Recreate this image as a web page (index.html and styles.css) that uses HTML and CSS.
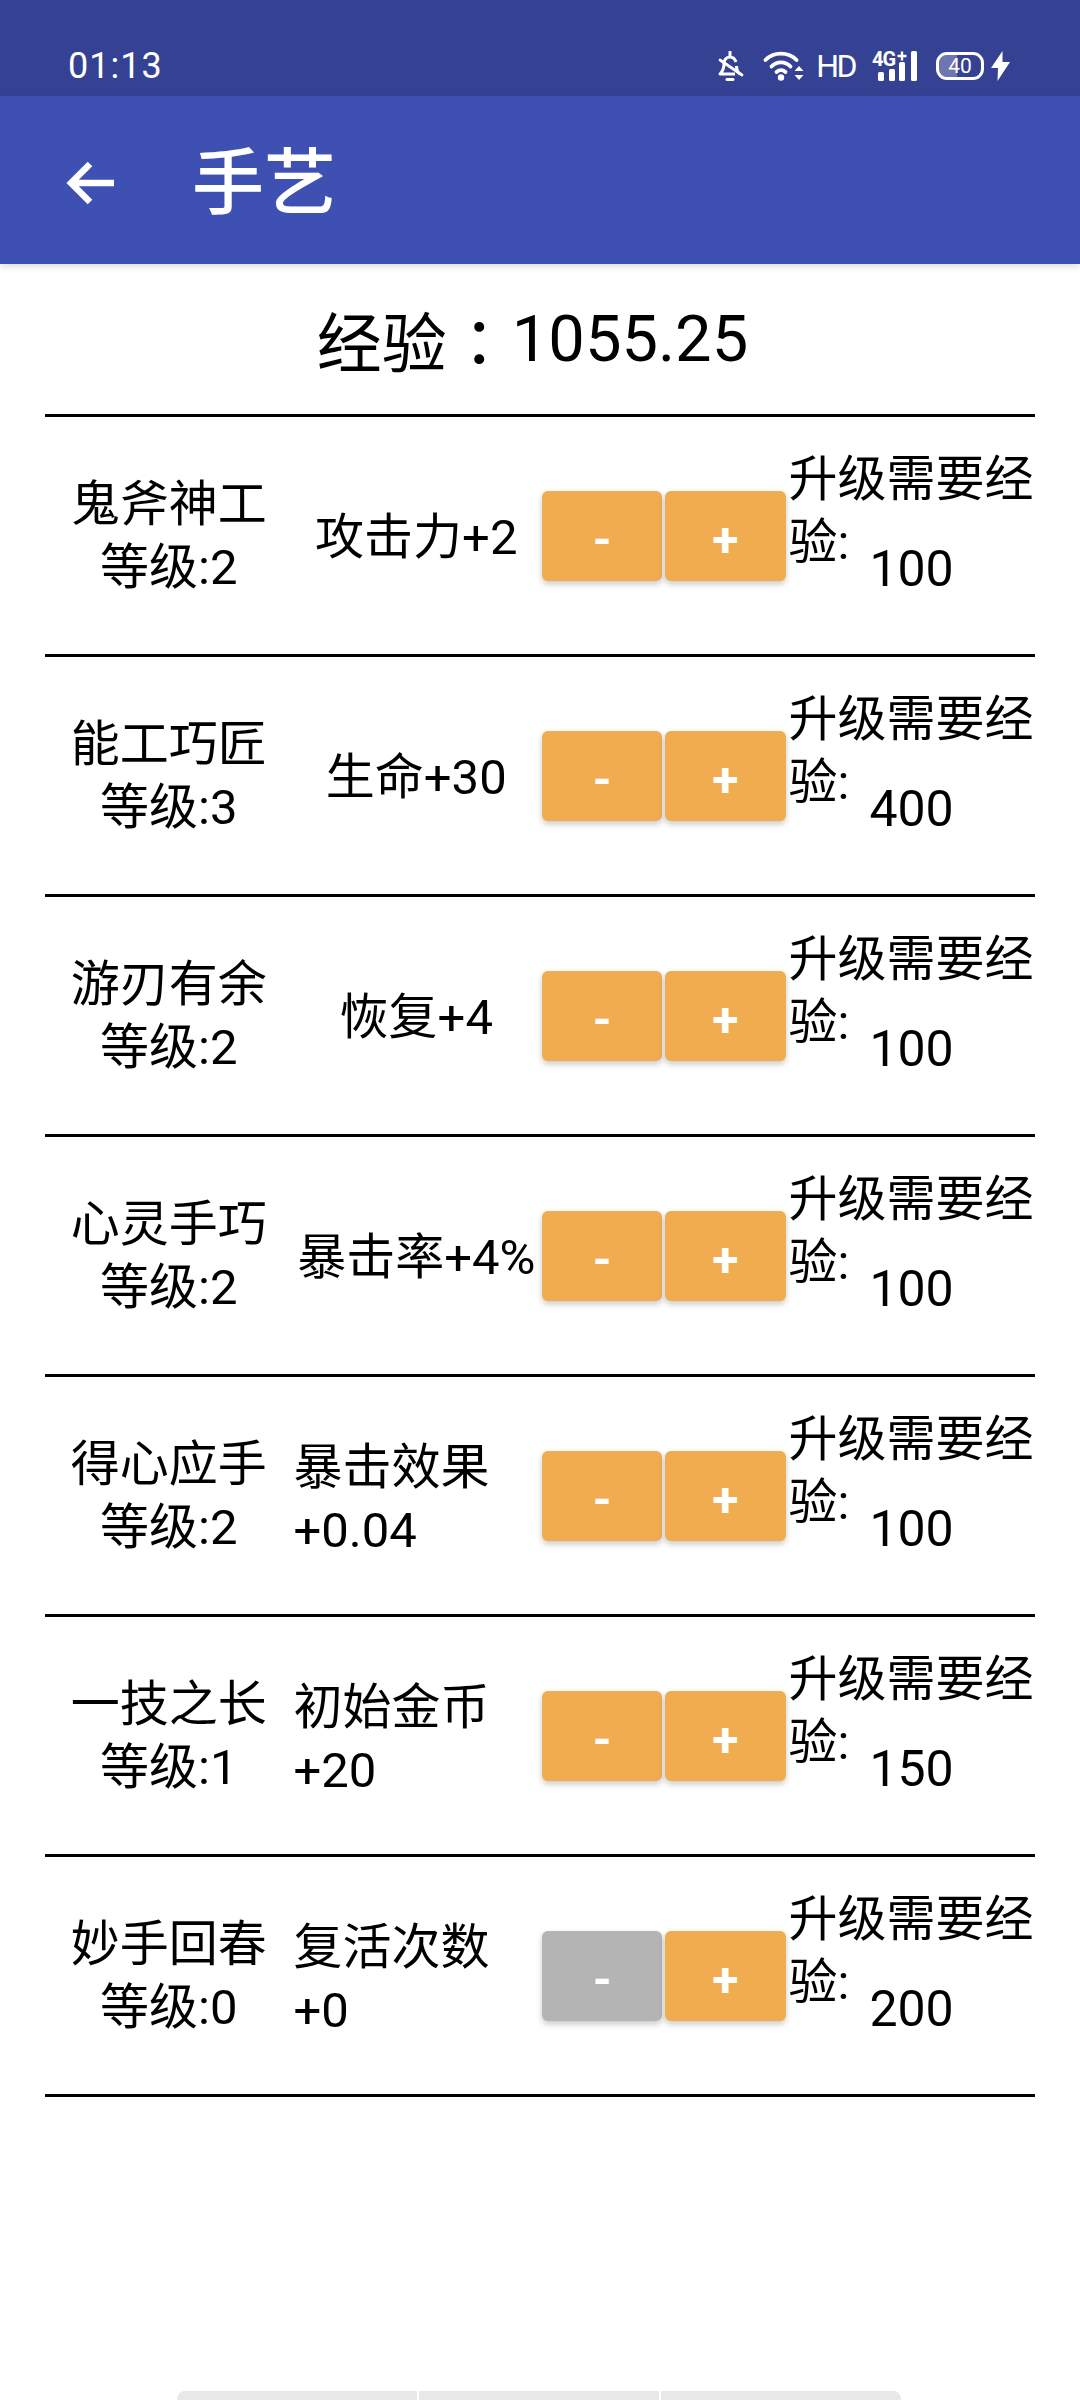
FILE: index.html
```html
<!DOCTYPE html>
<html lang="zh">
<head>
<meta charset="utf-8">
<title>手艺</title>
<link rel="stylesheet" href="styles.css">
</head>
<body>
<div class="page">
  <div class="status">
    <span class="time">01:13</span>
    <div class="status-icons">
      <svg class="ic-bell" viewBox="0 0 28 31" width="28" height="31"><path d="M14 1v4" stroke="#fff" stroke-width="3" stroke-linecap="round"/><path d="M20 11c-1-3-3-5-6-5-4 0-6 3-6 7 0 5-1 7-4 10h15" fill="none" stroke="#fff" stroke-width="3" stroke-linejoin="round"/><path d="M20.500 15c0 3 1 6 3 8" fill="none" stroke="#fff" stroke-width="3"/><path d="M4 9l22 15" stroke="#fff" stroke-width="2.800" stroke-linecap="round"/><path d="M11 28.500h6" stroke="#fff" stroke-width="3" stroke-linecap="round"/></svg>
      <svg class="ic-wifi" viewBox="0 0 42 30" width="42" height="30"><g fill="none" stroke="#fff" stroke-width="3.800" stroke-linecap="round"><path d="M2.500 9C10.500 .5 25.500 .5 33.500 9"/><path d="M8.500 15.500c5-5.500 14-5.500 19 0"/><path d="M13.500 21c3-2.500 6-2.500 9 0"/></g><circle cx="18" cy="26.500" r="3.200" fill="#fff"/><path d="M36 15l-4.500 5h9zM36 29l-4.500-5h9z" fill="#fff"/></svg>
      <span class="hd">HD</span>
      <svg class="ic-signal" viewBox="0 -6 45 36" width="45" height="36"><g fill="#fff"><rect x="6" y="21" width="6" height="9" rx="1.500"/><rect x="17" y="18" width="6" height="12" rx="1.500"/><rect x="27" y="11" width="6" height="19" rx="1.500"/><rect x="39" y="0" width="6" height="30" rx="1.500"/></g><text x="0" y="15" class="sig-text">4G</text><path d="M30 .5v9M25.500 5h9" stroke="#fff" stroke-width="2.400"/></svg>
      <div class="battery"><span class="battery-fill"></span><span class="battery-num">40</span></div>
      <svg class="ic-bolt" viewBox="0 0 19 30" width="19" height="30"><path d="M11.500 0L0 17h7l-.5 13L19 11h-7.500z" fill="#fff"/></svg>
    </div>
  </div>
  <header class="appbar">
    <svg class="back" viewBox="0 0 50 46" width="50" height="46"><path d="M4 23h44M24 4L5 23l19 19" fill="none" stroke="#fff" stroke-width="6.500"/></svg>
    <h1 class="title">手艺</h1>
  </header>
  <div class="exp">经验<span class="colon">：</span>1055.25</div>
  <div class="list">
    <div class="row">
      <div class="name">鬼斧神工<br>等级:2</div>
      <div class="effect">攻击力+2</div>
      <div class="btns"><button class="btn">-</button><button class="btn">+</button></div>
      <div class="cost">升级需要经验:<span class="cost-num">100</span></div>
    </div>
    <div class="row">
      <div class="name">能工巧匠<br>等级:3</div>
      <div class="effect">生命+30</div>
      <div class="btns"><button class="btn">-</button><button class="btn">+</button></div>
      <div class="cost">升级需要经验:<span class="cost-num">400</span></div>
    </div>
    <div class="row">
      <div class="name">游刃有余<br>等级:2</div>
      <div class="effect">恢复+4</div>
      <div class="btns"><button class="btn">-</button><button class="btn">+</button></div>
      <div class="cost">升级需要经验:<span class="cost-num">100</span></div>
    </div>
    <div class="row">
      <div class="name">心灵手巧<br>等级:2</div>
      <div class="effect">暴击率+4%</div>
      <div class="btns"><button class="btn">-</button><button class="btn">+</button></div>
      <div class="cost">升级需要经验:<span class="cost-num">100</span></div>
    </div>
    <div class="row">
      <div class="name">得心应手<br>等级:2</div>
      <div class="effect wrap">暴击效果<br>+0.04</div>
      <div class="btns"><button class="btn">-</button><button class="btn">+</button></div>
      <div class="cost">升级需要经验:<span class="cost-num">100</span></div>
    </div>
    <div class="row">
      <div class="name">一技之长<br>等级:1</div>
      <div class="effect wrap">初始金币<br>+20</div>
      <div class="btns"><button class="btn">-</button><button class="btn">+</button></div>
      <div class="cost">升级需要经验:<span class="cost-num">150</span></div>
    </div>
    <div class="row">
      <div class="name">妙手回春<br>等级:0</div>
      <div class="effect wrap">复活次数<br>+0</div>
      <div class="btns"><button class="btn btn-off">-</button><button class="btn">+</button></div>
      <div class="cost">升级需要经验:<span class="cost-num">200</span></div>
    </div>
  </div>
  <div class="tabs"><span class="tab tab-l"></span><span class="tab"></span><span class="tab tab-r"></span></div>
</div>
</body>
</html>
```
FILE: styles.css
```css
* { box-sizing: border-box; }
html, body { margin: 0; padding: 0; background: #fff; }
body { font-family: Roboto, "Noto Sans CJK SC", sans-serif; color: #000; }
.page { width: 1080px; height: 2400px; display: flex; flex-direction: column; overflow: hidden; }

.status { height: 96px; flex: none; background: #354294; color: #fff; display: flex; align-items: center; justify-content: space-between; padding: 36px 70px 0 68px; }
.time { font-size: 36px; letter-spacing: 1px; }
.status-icons { display: flex; align-items: center; }
.ic-bell { margin-right: 19px; }
.ic-wifi { margin-right: 11px; }
.hd { font: 32px/1 "Liberation Sans Narrow", Roboto, sans-serif; letter-spacing: -2.5px; margin-right: 17px; }
.ic-signal { margin: -6px 19px 0 0; }
.sig-text { font: 700 20px "Liberation Sans Narrow", Roboto, sans-serif; letter-spacing: -1px; fill: #fff; }
.battery { width: 48px; height: 28px; border: 3px solid #fff; border-radius: 11px; position: relative; display: flex; align-items: center; justify-content: center; margin-right: 7px; }
.battery-fill { position: absolute; left: 0; top: 0; bottom: 0; width: 44%; border-radius: 8px 0 0 8px; background: rgba(255,255,255,.28); }
.battery-num { font-size: 21px; line-height: 1; position: relative; }

.appbar { height: 168px; flex: none; background: #3e51b3; display: flex; align-items: center; padding-left: 66px; box-shadow: 0 3px 6px rgba(0,0,0,.12); position: relative; }
.back { flex: none; margin-top: 5px; }
.title { margin: 0 0 0 76px; padding-top: 8px; font-size: 72px; font-weight: 500; color: #fff; line-height: 1; }

.exp { height: 153px; flex: none; display: flex; align-items: center; justify-content: center; font-size: 65px; border-bottom: 3px solid #000; margin: 0 45px; padding: 0 15px 0 0; }
.colon { font-family: "Noto Sans CJK TC", sans-serif; }

.list { padding: 0 45px; }
.row { height: 240px; border-bottom: 3px solid #000; display: grid; grid-template-columns: repeat(4, 1fr); align-items: center; font-size: 49px; line-height: 63px; }
.name { text-align: center; }
.effect { text-align: center; padding-top: 3px; }
.effect.wrap { text-align: left; padding: 6px 0 0 1px; }
.btns { display: flex; gap: 3px; padding: 0 2px 0 2px; }
.btn { flex: 1; height: 90px; border: 0; padding: 7px 0 0; border-radius: 6px; background: #f0ac4e; color: #fff; font: 700 48px Roboto, sans-serif; box-shadow: 0 3px 6px rgba(0,0,0,.22); }
.btn-off { background: #b4b4b4; }
.cost { padding-left: 1px; margin-bottom: 24px; }
.cost-num { display: inline-block; margin-left: 20px; font-size: 50px; vertical-align: -27px; margin-bottom: -2px; }

.tabs { margin-top: auto; height: 9px; padding: 0 179px 0 177px; display: flex; gap: 2px; flex: none; }
.tab { flex: 1; background: #e8e8e8; }
.tab-l { border-top-left-radius: 8px; }
.tab-r { border-top-right-radius: 8px; }
```
